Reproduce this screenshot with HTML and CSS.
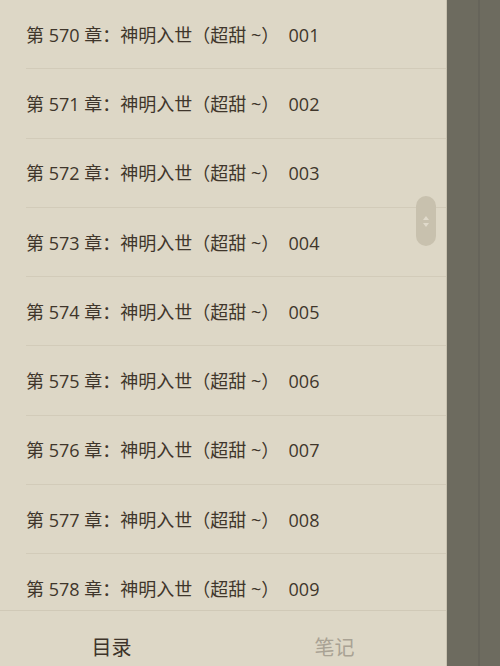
FILE: index.html
```html
<!DOCTYPE html>
<html lang="zh-CN">
<head>
    <meta charset="UTF-8">
    <meta name="viewport" content="width=device-width, initial-scale=1.0">
    <title>目录</title>
    <link rel="stylesheet" href="styles.css">
</head>
<body>
    <div class="screen">
        <aside class="drawer">
            <ul class="chapters">
                <li>第 570 章：神明入世（超甜 ~）  001</li>
                <li>第 571 章：神明入世（超甜 ~）  002</li>
                <li>第 572 章：神明入世（超甜 ~）  003</li>
                <li>第 573 章：神明入世（超甜 ~）  004</li>
                <li>第 574 章：神明入世（超甜 ~）  005</li>
                <li>第 575 章：神明入世（超甜 ~）  006</li>
                <li>第 576 章：神明入世（超甜 ~）  007</li>
                <li>第 577 章：神明入世（超甜 ~）  008</li>
                <li>第 578 章：神明入世（超甜 ~）  009</li>
            </ul>
            <div class="thumb">
                <span class="arrow up"></span>
                <span class="arrow down"></span>
            </div>
            <nav class="tabs">
                <a class="tab active">目录</a>
                <a class="tab">笔记</a>
            </nav>
        </aside>
        <div class="page">
            <div class="page-line"></div>
        </div>
    </div>
</body>
</html>
```

FILE: styles.css
```css
body {
    margin: 0;
    font-family: "Open Sans", "Noto Sans CJK SC", sans-serif;
    background: #6d6b5f;
}
.screen {
    display: flex;
    width: 500px;
    height: 666px;
    overflow: hidden;
}
.drawer {
    position: relative;
    width: 446px;
    flex-shrink: 0;
    display: flex;
    flex-direction: column;
    background: #ddd7c6;
    box-shadow: 1px 0 0 #c9c2b0;
}
.chapters {
    list-style: none;
    margin: 0;
    padding: 0;
    flex: 1;
    overflow: hidden;
}
.chapters li {
    box-sizing: border-box;
    height: 69.3px;
    margin-left: 26px;
    display: flex;
    align-items: center;
    border-bottom: 1px solid #d2cbb9;
    font-size: 18px;
    color: #3f362b;
    white-space: pre;
    padding-bottom: 1px;
}
.thumb {
    position: absolute;
    left: 416px;
    top: 196px;
    width: 20px;
    height: 50px;
    border-radius: 10px;
    background: #c8c1ae;
    display: flex;
    flex-direction: column;
    align-items: center;
    justify-content: center;
    gap: 3px;
}
.arrow {
    width: 0;
    height: 0;
    border-left: 3px solid transparent;
    border-right: 3px solid transparent;
}
.arrow.up {
    border-bottom: 4px solid #e0dacb;
}
.arrow.down {
    border-top: 4px solid #e0dacb;
}
.tabs {
    height: 55px;
    display: flex;
    border-top: 1px solid #d0c9b7;
}
.tab {
    flex: 1;
    display: flex;
    align-items: center;
    justify-content: center;
    font-size: 20px;
    color: #a9a294;
    padding-top: 16px;
}
.tab.active {
    color: #3e342a;
}
.page {
    flex: 1;
    display: flex;
    justify-content: flex-end;
    padding-right: 20px;
}
.page-line {
    width: 2px;
    background: #66645a;
}
```
